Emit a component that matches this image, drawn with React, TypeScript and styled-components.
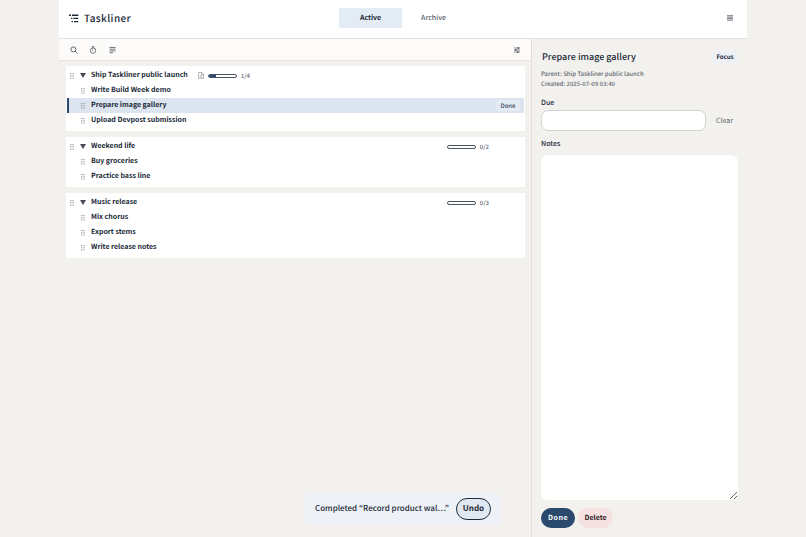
import React from "react";
import styled, { createGlobalStyle } from "styled-components";

const GlobalStyle = createGlobalStyle`
  *, *::before, *::after { box-sizing: border-box; }
  body {
    margin: 0;
    background: #f2f1ed;
    color: #202937;
    font-family: "Noto Sans CJK JP", "Noto Sans", sans-serif;
    font-size: 7px;
    line-height: 10px;
    text-rendering: geometricPrecision;
  }
  button, input, textarea { font: inherit; color: inherit; text-rendering: inherit; letter-spacing: inherit; }
  button { margin: 0; padding: 0; border: 0; background: none; cursor: pointer; white-space: nowrap; }
  svg { display: block; flex: none; }
`;

const Shell = styled.div`
  display: flex;
  flex-direction: column;
  max-width: 688px;
  min-height: 100vh;
  margin: 0 auto;
`;

const Header = styled.header`
  display: grid;
  grid-template-columns: 1fr auto 1fr;
  align-items: center;
  height: 39px;
  padding: 0 12px 2px 10px;
  background: #fff;
  border-bottom: 1px solid #e3e1dd;
`;

const Brand = styled.h1`
  display: flex;
  align-items: center;
  gap: 5px;
  margin: 0;
  font-size: 10px;
  line-height: 16px;
  font-weight: 500;
  letter-spacing: 0.04em;
`;

const Tabs = styled.nav`
  display: flex;
`;

const Tab = styled.button<{ $active?: boolean }>`
  width: 63px;
  height: 20px;
  color: ${(p) => (p.$active ? "#202937" : "#565d68")};
  background: ${(p) => (p.$active ? "#e3ecf5" : "transparent")};
  font-weight: ${(p) => (p.$active ? 700 : 500)};
`;

const IconButton = styled.button<{ $end?: boolean }>`
  display: grid;
  place-items: center;
  width: 10px;
  height: 10px;
  margin-left: ${(p) => (p.$end ? "auto" : "0")};
  color: #535a65;
`;

const Body = styled.div`
  display: grid;
  grid-template-columns: minmax(0, 1fr) 215px;
  flex: 1;
`;

const Outline = styled.main`
  border-right: 1px solid #e0dfdb;
`;

const Toolbar = styled.div`
  display: flex;
  align-items: center;
  gap: 9px;
  height: 22px;
  padding: 0 9px 0 10px;
  background: #fcfbf9;
  border-bottom: 1px solid #e6e4e0;
`;

const Groups = styled.div`
  display: flex;
  flex-direction: column;
  gap: 6px;
  padding: 5px 6px 5px 7px;
`;

const Group = styled.section`
  padding: 2px 1px 3px;
  background: #fff;
`;

const Row = styled.div<{ $selected?: boolean }>`
  display: grid;
  grid-template-columns: 8px 8px minmax(0, 1fr) auto;
  align-items: center;
  gap: 3px;
  height: 15px;
  padding: 0 4px 0 1px;
  background: ${(p) => (p.$selected ? "#dbe4ef" : "transparent")};
  box-shadow: ${(p) => (p.$selected ? "inset 2px 0 #29496d" : "none")};
`;

const Slot = styled.span`
  display: grid;
  place-items: center;
  height: 11px;
`;

const TitleCell = styled.div`
  display: flex;
  align-items: center;
  gap: 10px;
  padding-left: 1px;
`;

const TaskTitle = styled.span`
  line-height: 13px;
  font-weight: 700;
  white-space: nowrap;
`;

const ProgressGroup = styled.div<{ $end?: boolean }>`
  display: flex;
  align-items: center;
  gap: 4px;
  height: 11px;
  margin-right: ${(p) => (p.$end ? "31px" : "0")};
  font-size: 6px;
  font-weight: 500;
  color: #5f6672;
`;

const Bar = styled.div`
  width: 29px;
  height: 4px;
  border: 1px solid #4a5362;
  border-radius: 2px;
  overflow: hidden;
  background: #fff;
`;

const Fill = styled.div`
  height: 100%;
  background: #29496d;
`;

const RowDone = styled.button`
  width: 24px;
  height: 11px;
  border-radius: 3px;
  background: #e5ebf3;
  color: #39495e;
  font-size: 6px;
  font-weight: 500;
`;

const Details = styled.aside`
  display: flex;
  flex-direction: column;
  padding: 9px;
`;

const DetailHead = styled.div`
  display: flex;
  align-items: center;
  justify-content: space-between;
  height: 17px;
  padding-left: 1px;
`;

const DetailTitle = styled.h2`
  margin: 0;
  font-size: 9px;
  line-height: 16px;
  font-weight: 500;
`;

const Focus = styled.button`
  width: 26px;
  height: 12px;
  border-radius: 3px;
  background: #edf0f5;
  color: #202937;
  font-size: 6px;
  font-weight: 700;
`;

const Meta = styled.div`
  margin: 4px 0 9px;
  color: #646a73;
  font-size: 6px;
  font-weight: 500;
`;

const Label = styled.label`
  font-weight: 500;
`;

const DueRow = styled.div`
  display: grid;
  grid-template-columns: minmax(0, 1fr) 27px;
  gap: 5px;
  margin: 2px 0 8px;
`;

const DueInput = styled.input`
  width: 100%;
  height: 21px;
  padding: 0 8px;
  border: 1px solid #d2d1d4;
  border-radius: 7px;
  background: #fff;
`;

const Clear = styled.button`
  color: #626871;
`;

const Notes = styled.textarea`
  flex: 1;
  width: 100%;
  min-height: 80px;
  margin: 6px 0 8px;
  padding: 8px;
  border: 0;
  border-radius: 7px;
  background: #fff;
  resize: both;
`;

const Actions = styled.div`
  display: flex;
  gap: 3px;
`;

const Action = styled.button<{ $danger?: boolean }>`
  width: ${(p) => (p.$danger ? "35px" : "34px")};
  height: 20px;
  border-radius: 10px;
  background: ${(p) => (p.$danger ? "#f6e1e1" : "#29496d")};
  color: ${(p) => (p.$danger ? "#301c24" : "#fff")};
  font-weight: 700;
  letter-spacing: ${(p) => (p.$danger ? "normal" : "0.08em")};
`;

const Toast = styled.div`
  position: fixed;
  left: 50%;
  bottom: 12px;
  transform: translateX(-50%);
  display: flex;
  align-items: center;
  gap: 7px;
  padding: 5px 10px;
  border-radius: 5px;
  background: #eef1f6;
  font-size: 8px;
  font-weight: 500;
  white-space: nowrap;
`;

const Undo = styled.button`
  width: 35px;
  height: 22px;
  border: 1px solid #202937;
  border-radius: 11px;
  background: #e0e8f1;
  font-weight: 700;
`;

const BrandIcon = () => (
  <svg width="10" height="10" viewBox="0 0 10 10" stroke="currentColor" strokeWidth="1.4" aria-hidden="true">
    <path d="M0 2.2h2M3 2.2h6.3M2 5.4h1.4M4.4 5.4h4.9M2.6 8.6H4M5 8.6h4.3" />
  </svg>
);

const SearchIcon = () => (
  <svg width="8" height="8" viewBox="0 0 8 8" fill="none" stroke="currentColor" strokeWidth="0.9" aria-hidden="true">
    <circle cx="3.4" cy="3.4" r="2.5" />
    <path d="M5.2 5.2 7.5 7.5" />
  </svg>
);

const TimerIcon = () => (
  <svg width="8" height="8" viewBox="0 0 8 8" fill="none" stroke="currentColor" strokeWidth="0.8" aria-hidden="true">
    <circle cx="4" cy="4.6" r="2.7" />
    <path d="M2.8.6h2.4M4 .6v1.3M6 2.5l.7-.7M4 4.6 2.9 3.5" />
  </svg>
);

const LinesIcon = () => (
  <svg width="7" height="8" viewBox="0 0 7 8" stroke="currentColor" strokeWidth="0.8" aria-hidden="true">
    <path d="M.5 1.5h6M.5 3.2h6M.5 4.9h6M.5 6.6h3.5" />
  </svg>
);

const SlidersIcon = () => (
  <svg width="6" height="6" viewBox="0 0 6 6" fill="none" stroke="currentColor" strokeWidth="0.7" aria-hidden="true">
    <path d="M0 1h6M0 3h6M0 5h6" />
    <path d="M4.2 0v2M1.8 2v2M3.7 4v2" strokeWidth="1.2" />
  </svg>
);

const MenuIcon = () => (
  <svg width="6" height="6" viewBox="0 0 6 6" stroke="currentColor" strokeWidth="0.8" aria-hidden="true">
    <path d="M0 .7h6M0 2.2h6M0 3.7h6M0 5.2h6" />
  </svg>
);

const NoteIcon = () => (
  <svg width="6" height="7" viewBox="0 0 6 7" fill="none" stroke="#858a91" strokeWidth="0.6" aria-hidden="true">
    <path d="M.5.5h3L5.5 2.4v4.1h-5zM3.5.5v2h2M1.6 3.8h2.8M1.6 5h2.8" />
  </svg>
);

const Grip = () => (
  <svg width="4" height="6" viewBox="0 0 4 6" fill="#858a92" aria-hidden="true">
    {[0, 2.2, 4.4].map((y) => (
      <React.Fragment key={y}>
        <rect x="0.2" y={y} width="1.1" height="1.1" />
        <rect x="2.5" y={y} width="1.1" height="1.1" />
      </React.Fragment>
    ))}
  </svg>
);

const Caret = () => (
  <svg width="6" height="5" viewBox="0 0 6 5" fill="#454c57" aria-hidden="true">
    <path d="M0 0h6L3 5z" />
  </svg>
);

interface TaskGroup {
  title: string;
  done: number;
  total: number;
  note?: boolean;
  tasks: string[];
}

const groups: TaskGroup[] = [
  {
    title: "Ship Taskliner public launch",
    done: 1,
    total: 4,
    note: true,
    tasks: ["Write Build Week demo", "Prepare image gallery", "Upload Devpost submission"],
  },
  { title: "Weekend life", done: 0, total: 2, tasks: ["Buy groceries", "Practice bass line"] },
  { title: "Music release", done: 0, total: 3, tasks: ["Mix chorus", "Export stems", "Write release notes"] },
];

const selectedTask = "Prepare image gallery";

function Progress({ done, total, end }: { done: number; total: number; end?: boolean }) {
  return (
    <ProgressGroup $end={end}>
      <Bar>
        <Fill style={{ width: `${(done / total) * 100}%` }} />
      </Bar>
      <span>{`${done}/${total}`}</span>
    </ProgressGroup>
  );
}

function GroupCard({ group }: { group: TaskGroup }) {
  return (
    <Group>
      <Row>
        <Slot><Grip /></Slot>
        <Slot as="button" aria-label={`Collapse ${group.title}`}><Caret /></Slot>
        <TitleCell>
          <TaskTitle>{group.title}</TaskTitle>
          {group.note && (
            <ProgressGroup>
              <NoteIcon />
              <Progress done={group.done} total={group.total} />
            </ProgressGroup>
          )}
        </TitleCell>
        {!group.note && <Progress done={group.done} total={group.total} end />}
      </Row>
      {group.tasks.map((task) => (
        <Row key={task} $selected={task === selectedTask}>
          <Slot />
          <Slot><Grip /></Slot>
          <TitleCell><TaskTitle>{task}</TaskTitle></TitleCell>
          {task === selectedTask && <RowDone>Done</RowDone>}
        </Row>
      ))}
    </Group>
  );
}

export default function App() {
  return (
    <>
      <GlobalStyle />
      <Shell>
        <Header>
          <Brand><BrandIcon />Taskliner</Brand>
          <Tabs>
            <Tab $active>Active</Tab>
            <Tab>Archive</Tab>
          </Tabs>
          <IconButton $end aria-label="Menu"><MenuIcon /></IconButton>
        </Header>
        <Body>
          <Outline>
            <Toolbar>
              <IconButton aria-label="Search"><SearchIcon /></IconButton>
              <IconButton aria-label="Timer"><TimerIcon /></IconButton>
              <IconButton aria-label="Notes view"><LinesIcon /></IconButton>
              <IconButton $end aria-label="Filters"><SlidersIcon /></IconButton>
            </Toolbar>
            <Groups>
              {groups.map((group) => <GroupCard key={group.title} group={group} />)}
            </Groups>
          </Outline>
          <Details>
            <DetailHead>
              <DetailTitle>{selectedTask}</DetailTitle>
              <Focus>Focus</Focus>
            </DetailHead>
            <Meta>
              <div>Parent: Ship Taskliner public launch</div>
              <div>Created: 2025-07-09 03:40</div>
            </Meta>
            <Label htmlFor="due">Due</Label>
            <DueRow>
              <DueInput id="due" type="text" />
              <Clear>Clear</Clear>
            </DueRow>
            <Label htmlFor="notes">Notes</Label>
            <Notes id="notes" />
            <Actions>
              <Action>Done</Action>
              <Action $danger>Delete</Action>
            </Actions>
          </Details>
        </Body>
      </Shell>
      <Toast role="status">
        <span>Completed “Record product wal…”</span>
        <Undo>Undo</Undo>
      </Toast>
    </>
  );
}
